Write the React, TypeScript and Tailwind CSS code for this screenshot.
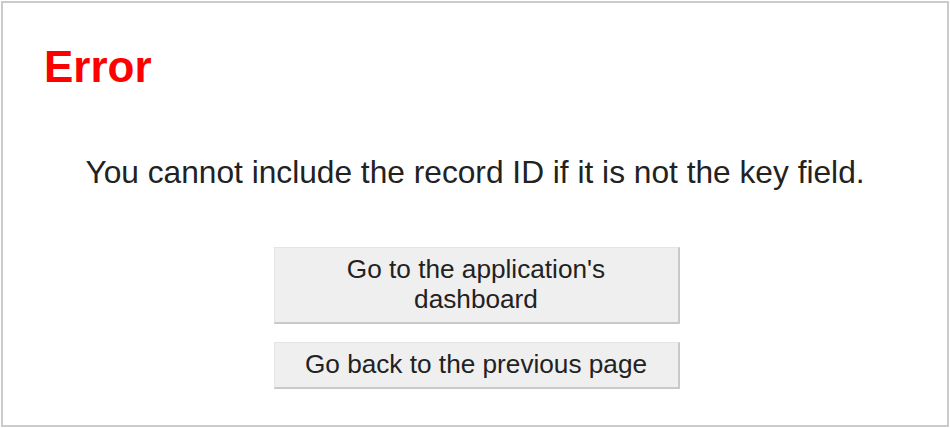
import React from "react";

const font = { fontFamily: '"Liberation Sans", Arial, Helvetica, sans-serif' };

function GrayButton({ children, className }: { children: React.ReactNode; className?: string }) {
  return (
    <button
      className={[
        "w-[406px] border-t border-l border-r-2 border-b-2 border-t-[#e4e4e4] border-l-[#e4e4e4] border-r-[#c9c9c9] border-b-[#c9c9c9] bg-[#efefef] text-center text-[26.2px] leading-[30px] text-[#222]",
        className ?? "",
      ].join(" ")}
    >
      {children}
    </button>
  );
}

export default function App() {
  return (
    <div className="h-[428px] w-[950px] bg-white p-[1px]" style={font}>
      <div className="flex h-full flex-col border-2 border-[#cbcbcb] bg-white">
        {/* heading */}
        <h1 className="ml-[41px] mt-[42px] text-[44px] font-bold leading-[44px] text-[#ff0000]">Error</h1>

        {/* message */}
        <p className="mt-[65px] text-center text-[31.7px] leading-[36px] text-[#222]">
          You cannot include the record ID if it is not the key field.
        </p>

        {/* actions */}
        <div className="mt-[57px] flex flex-col items-center gap-[18px] pl-[3px]">
          <GrayButton className="h-[77px] pb-[3px]">
            Go to the application&apos;s
            <br />
            dashboard
          </GrayButton>
          <GrayButton className="h-[47px] pb-[2px]">Go back to the previous page</GrayButton>
        </div>
      </div>
    </div>
  );
}
